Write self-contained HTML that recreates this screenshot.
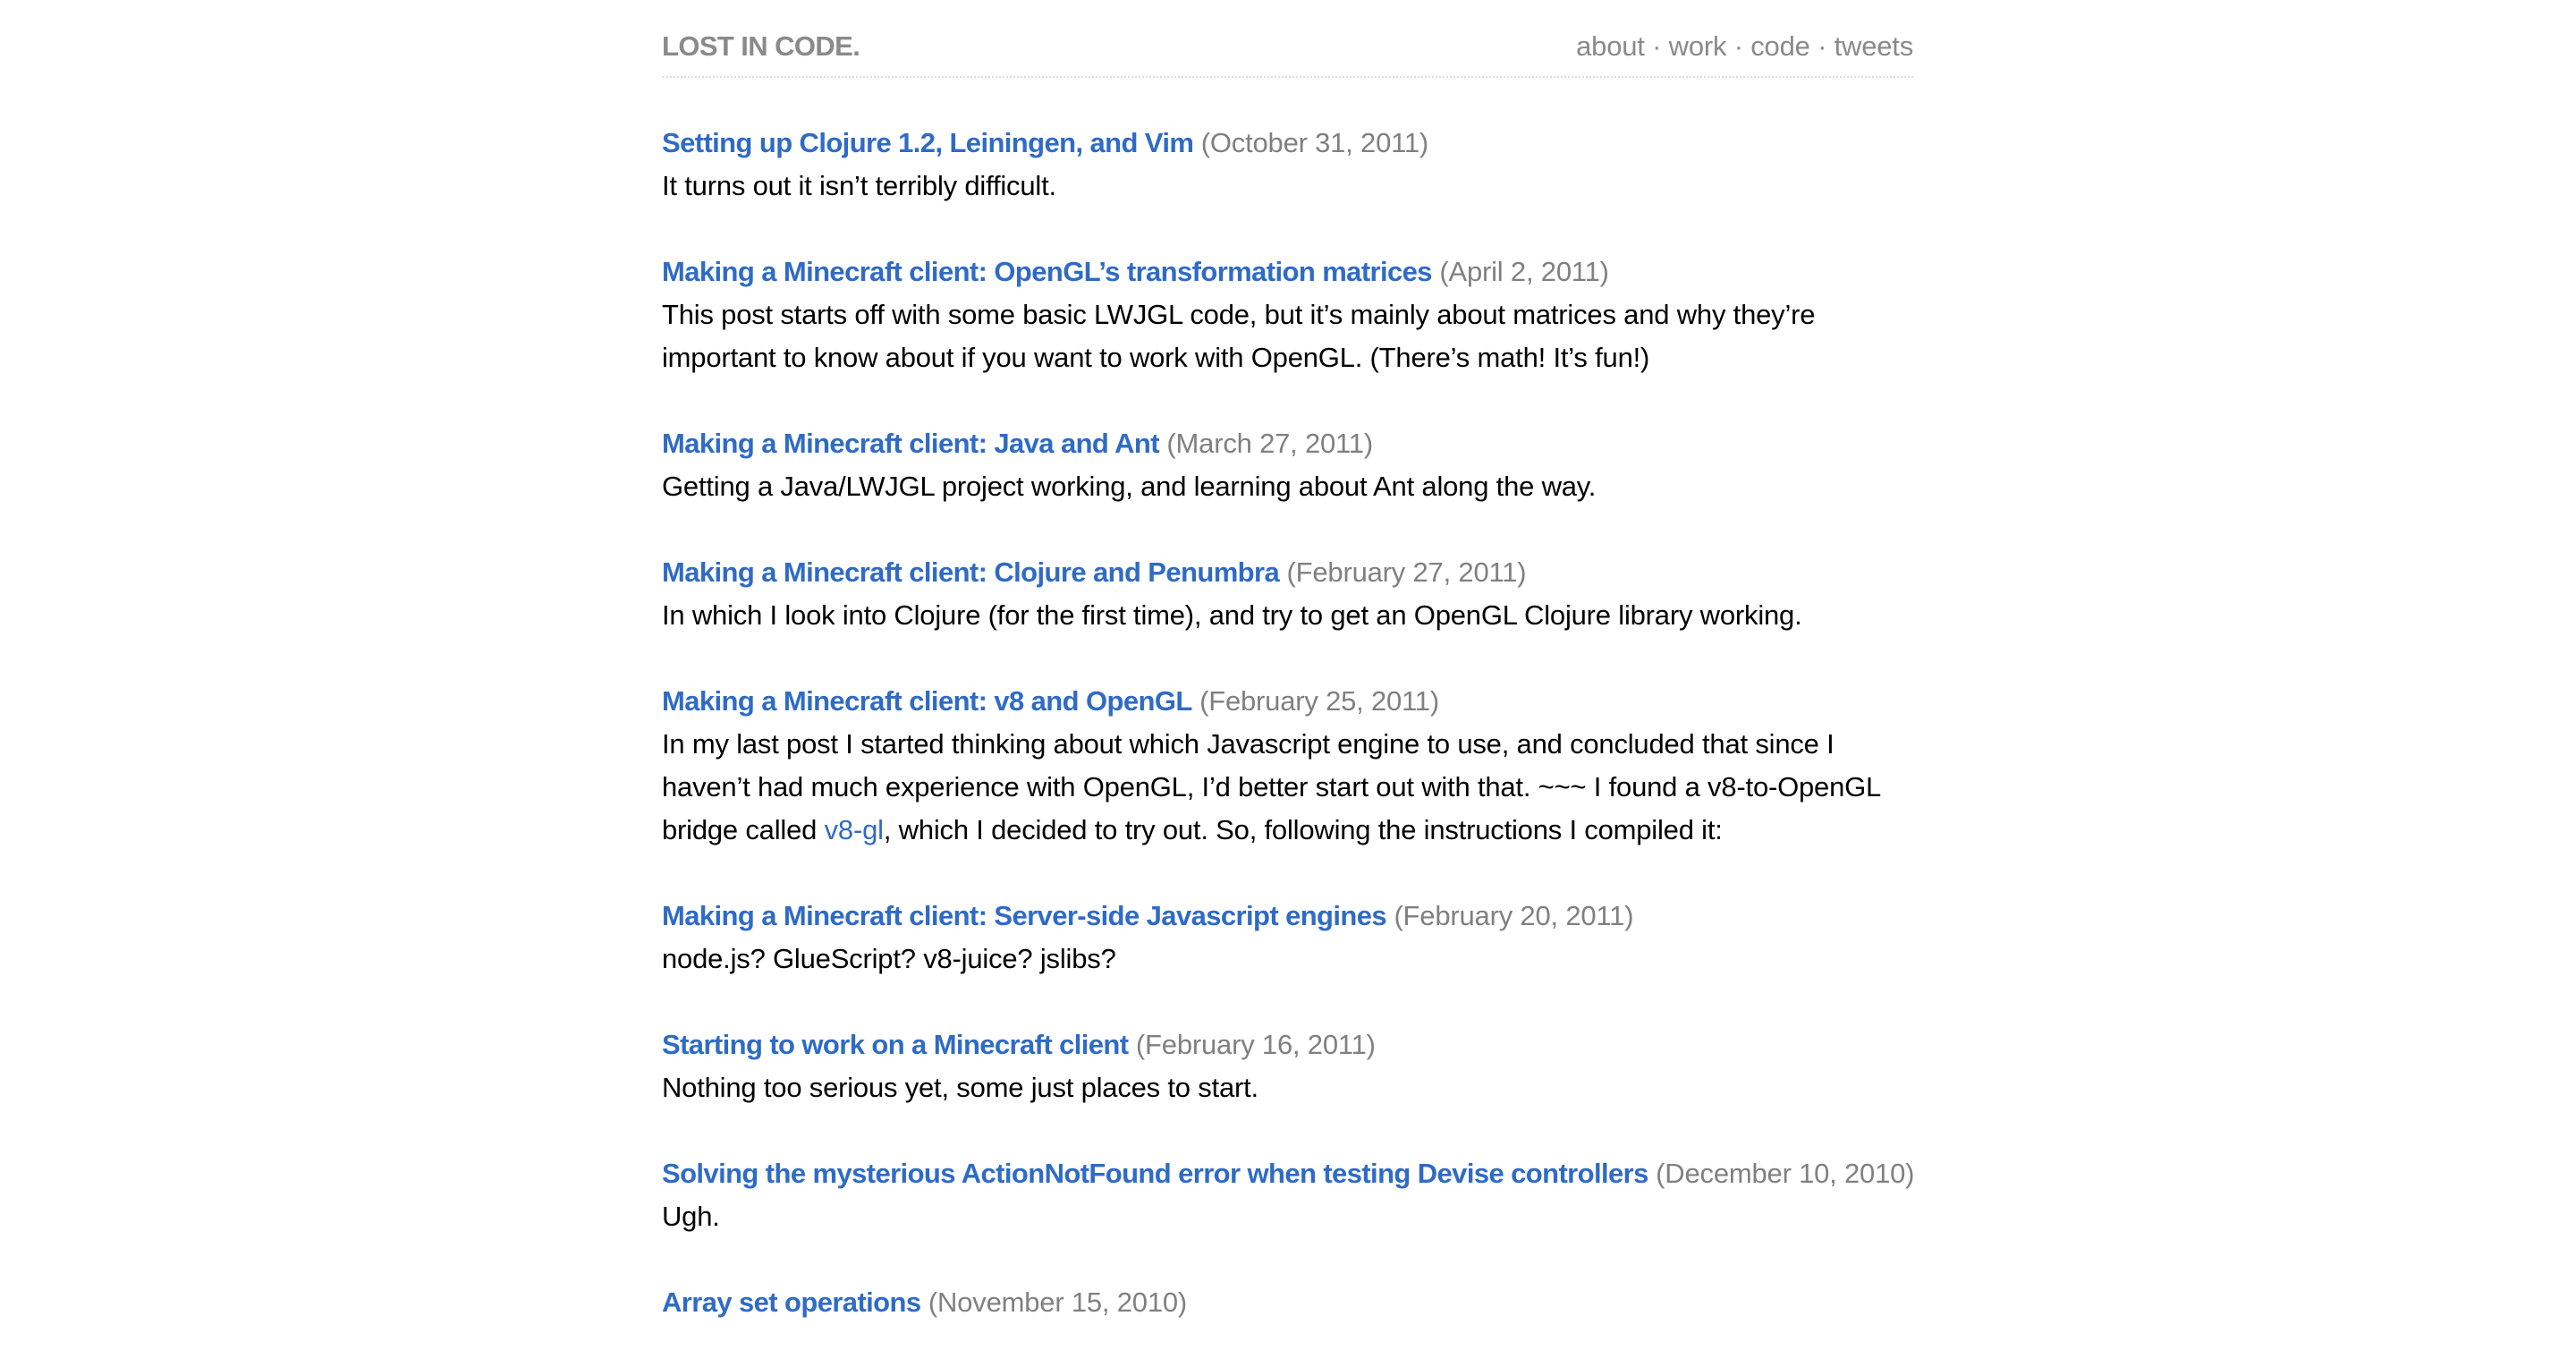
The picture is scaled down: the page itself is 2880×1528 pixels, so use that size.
<!DOCTYPE html>
<html><head><meta charset="utf-8"><style>
html,body{margin:0;padding:0;background:#fff;}
body{width:2880px;height:1490px;overflow:hidden;font-family:"Liberation Sans",Arial,sans-serif;font-size:31px;line-height:48px;color:#000;letter-spacing:-0.2px;}
.wrap{position:absolute;left:740px;width:1399px;top:28px;}
.hd{display:flex;justify-content:space-between;border-bottom:2px dotted #ddd;padding-bottom:9px;height:48px;}
.logo{font-weight:bold;color:#8a8a8a;letter-spacing:-0.6px;}
.nav{color:#8a8a8a;}
.posts{margin-top:49px;}
.p{margin-bottom:48px;}
.p p{margin:0;white-space:nowrap;}
.t{white-space:nowrap;}
a{color:#2f6bc6;text-decoration:none;}
.t a{font-weight:bold;letter-spacing:-0.6px;}
.d{color:#808080;}
</style></head><body><div class="wrap">
<div class="hd"><span class="logo">LOST IN CODE.</span><span class="nav">about · work · code · tweets</span></div>
<div class="posts">
<div class="p"><div class="t"><a>Setting up Clojure 1.2, Leiningen, and Vim</a> <span class="d">(October 31, 2011)</span></div><p>It turns out it isn’t terribly difficult.</p></div>
<div class="p"><div class="t"><a>Making a Minecraft client: OpenGL’s transformation matrices</a> <span class="d">(April 2, 2011)</span></div><p>This post starts off with some basic LWJGL code, but it’s mainly about matrices and why they’re<br>important to know about if you want to work with OpenGL. (There’s math! It’s fun!)</p></div>
<div class="p"><div class="t"><a>Making a Minecraft client: Java and Ant</a> <span class="d">(March 27, 2011)</span></div><p>Getting a Java/LWJGL project working, and learning about Ant along the way.</p></div>
<div class="p"><div class="t"><a>Making a Minecraft client: Clojure and Penumbra</a> <span class="d">(February 27, 2011)</span></div><p>In which I look into Clojure (for the first time), and try to get an OpenGL Clojure library working.</p></div>
<div class="p"><div class="t"><a>Making a Minecraft client: v8 and OpenGL</a> <span class="d">(February 25, 2011)</span></div><p>In my last post I started thinking about which Javascript engine to use, and concluded that since I<br>haven’t had much experience with OpenGL, I’d better start out with that. ~~~ I found a v8-to-OpenGL<br>bridge called <a>v8-gl</a>, which I decided to try out. So, following the instructions I compiled it:</p></div>
<div class="p"><div class="t"><a>Making a Minecraft client: Server-side Javascript engines</a> <span class="d">(February 20, 2011)</span></div><p>node.js? GlueScript? v8-juice? jslibs?</p></div>
<div class="p"><div class="t"><a>Starting to work on a Minecraft client</a> <span class="d">(February 16, 2011)</span></div><p>Nothing too serious yet, some just places to start.</p></div>
<div class="p"><div class="t"><a>Solving the mysterious ActionNotFound error when testing Devise controllers</a> <span class="d">(December 10, 2010)</span></div><p>Ugh.</p></div>
<div class="p"><div class="t"><a>Array set operations</a> <span class="d">(November 15, 2010)</span></div></div>
</div></div></body></html>
